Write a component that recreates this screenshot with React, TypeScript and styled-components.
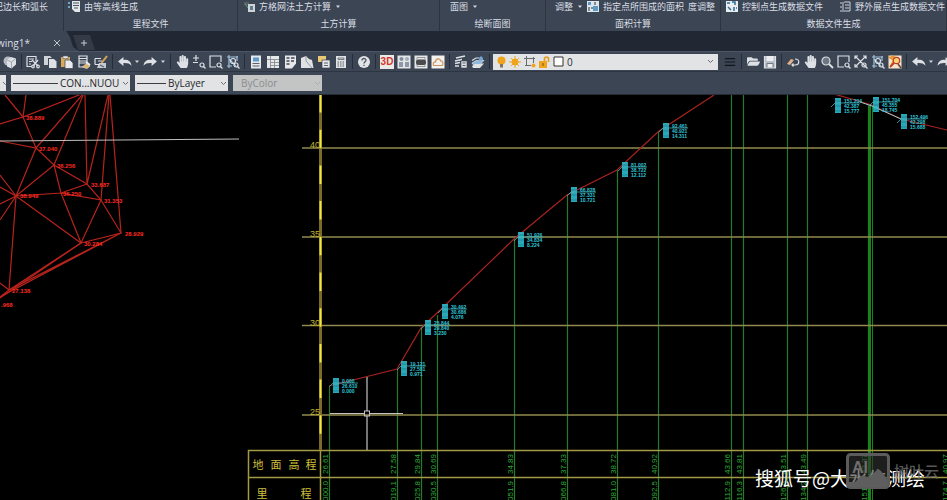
import React from "react";
import styled, { createGlobalStyle } from "styled-components";
import { FaHandPaper, FaFolderOpen } from "react-icons/fa";

const Global = createGlobalStyle`
  * { box-sizing: border-box; }
  body { margin: 0; background: #000; }
  button, select { font: inherit; color: inherit; margin: 0; }
`;

const SANS = `"Open Sans", "Noto Sans CJK SC", sans-serif`;

const Page = styled.div`
  min-height: 100vh;
  display: flex;
  flex-direction: column;
  overflow: hidden;
  background: #000;
  font-family: ${SANS};
  color: #dbdfe5;
`;

/* ---------- ribbon ---------- */

const Ribbon = styled.header`
  display: flex;
  height: 31px;
  background: #3c4554;
  overflow: hidden;
`;

const Panel = styled.section<{ $width?: number }>`
  flex: ${(p) => (p.$width ? `0 0 ${p.$width}px` : "1 0 0")};
  min-width: 0;
  display: flex;
  flex-direction: column;
  border-right: 1px solid #2c3441;
  font-family: "Noto Sans CJK SC", sans-serif;
  font-size: 9px;
  line-height: 12px;
`;

const PanelRow = styled.div<{ $start?: number; $end?: boolean; $gap?: number }>`
  display: flex;
  align-items: center;
  justify-content: ${(p) => (p.$end ? "flex-end" : "flex-start")};
  gap: ${(p) => p.$gap ?? 0}px;
  height: 13px;
  padding-left: ${(p) => p.$start ?? 0}px;
  padding-right: ${(p) => (p.$end ? 15 : 0)}px;
`;

const PanelTitle = styled.h2`
  margin: 5px 0 0;
  font-size: 9px;
  line-height: 12px;
  font-weight: 400;
  text-align: center;
`;

const Command = styled.button`
  display: flex;
  align-items: center;
  gap: 4px;
  flex: none;
  padding: 0;
  border: 0;
  background: none;
  white-space: nowrap;
  line-height: 12px;
  svg { display: block; flex: none; }
`;

/* ---------- file tabs ---------- */

const TabStrip = styled.nav`
  display: flex;
  height: 20px;
  background: #212833;
`;

const FileTab = styled.div`
  display: flex;
  align-items: center;
  justify-content: flex-end;
  width: 79px;
  padding: 4px 18px 0 0;
  gap: 23px;
  overflow: hidden;
  background: #3c4554;
  clip-path: polygon(0 0, 66px 0, 70px 6px, 73px 16px, 79px 20px, 0 20px);
`;

const TabButton = styled.button`
  flex: none;
  padding: 0;
  border: 0;
  background: none;
  font-size: 10px;
  line-height: 14px;
  svg { display: block; }
`;

const NewTab = styled.button`
  display: flex;
  align-items: center;
  justify-content: center;
  width: 22px;
  margin: 4px 0 1px -6px;
  padding: 0;
  border: 0;
  background: #343b47;
  clip-path: polygon(0 0, 17px 0, 22px 15px, 5px 15px);
`;

/* ---------- toolbars ---------- */

const Toolbar = styled.div`
  display: flex;
  align-items: center;
  height: 21px;
  padding-left: 2px;
  gap: 1px;
  background: #3c4554;
  border-top: 1px solid #4b5565;
  border-bottom: 1px solid #2d3542;
  overflow: hidden;
`;

const Tool = styled.button`
  display: flex;
  align-items: center;
  justify-content: center;
  flex: 0 0 16px;
  height: 16px;
  padding: 0;
  border: 0;
  background: none;
  color: #dde1e6;
  svg { display: block; }
`;

const Caret = styled(Tool)`
  flex-basis: 8px;
`;

const Divider = styled.span`
  flex: 0 0 1px;
  height: 15px;
  margin: 0 2px;
  background: #262d38;
`;

const LayerField = styled.label`
  display: flex;
  align-items: center;
  flex: 0 0 225px;
  height: 16px;
  margin-right: 3px;
  padding: 0 4px;
  gap: 3px;
  background: #e2e3e4;
  color: #2a2d32;
  font-size: 9px;
  svg { display: block; flex: none; }
`;

const PlainSelect = styled.select`
  appearance: none;
  flex: 1;
  min-width: 0;
  height: 16px;
  padding: 0;
  border: 0;
  background: none;
  font-size: 10px;
  line-height: 16px;
  &:disabled { opacity: 1; color: #8b8d8f; }
`;

const PropertyBar = styled.div`
  display: flex;
  height: 23px;
  padding: 3px 0 0;
  gap: 5px;
  background: #3c4554;
  border-bottom: 1px solid #252c36;
`;

const Field = styled.label<{ $width: number; $off?: boolean }>`
  display: flex;
  align-items: center;
  flex: 0 0 ${(p) => p.$width}px;
  height: 16px;
  padding: 0 1px 0 ${(p) => (p.$off ? 8 : 2)}px;
  gap: 2px;
  overflow: hidden;
  background: ${(p) => (p.$off ? "#c3c4c4" : "#e2e3e4")};
  color: #24272c;
  svg { display: block; flex: none; }
`;

const LineSample = styled.span<{ $width: number }>`
  flex: 0 0 ${(p) => p.$width}px;
  height: 1px;
  background: #3a3d42;
`;

/* ---------- drawing area ---------- */

const Workspace = styled.main`
  position: relative;
  background: #000;
`;

const Drawing = styled.svg`
  display: block;
  width: 100%;
  height: auto;
`;

const Account = styled.div`
  position: absolute;
  right: 22px;
  bottom: 8px;
  font: 400 19px/28px "Noto Sans CJK SC", sans-serif;
  color: #fff;
  white-space: nowrap;
`;

const Brand = styled.div`
  position: absolute;
  right: 8px;
  bottom: 11px;
  display: flex;
  align-items: center;
  gap: 4px;
  font: 500 15px/20px "Noto Sans CJK SC", sans-serif;
  color: rgba(112, 112, 112, 0.8);
  svg { display: block; }
`;

/* ---------- icons ---------- */

const Icon = ({ children, size = 14 }: { children: React.ReactNode; size?: number }) => (
  <svg width={size} height={size} viewBox="0 0 14 14" fill="none" stroke="currentColor" strokeWidth="1.2">
    {children}
  </svg>
);

const Chevron = ({ color = "#6a6d71" }: { color?: string }) => (
  <svg width="7" height="5" viewBox="0 0 7 5" fill="none" stroke={color}>
    <path d="M1 1l2.5 2.5L6 1" />
  </svg>
);

const Down = () => (
  <svg width="6" height="4" viewBox="0 0 6 4" fill="#d3d8df">
    <path d="M1 0.5h4L3 3z" />
  </svg>
);

const Lens = <><circle cx="10" cy="10" r="2" /><path d="M11.5 11.5L13.5 13.5" /></>;

const icons: Record<string, React.ReactNode> = {
  publish: <Icon><g fill="currentColor" stroke="none"><circle cx="5" cy="6" r="4.5" opacity=".75" /><path d="M4 5l4-3 5 1.500v6l-4.500 4-4.500-2z" /></g><path d="M4 5l4.500 2L13 3.500M8.500 7v6" stroke="#8b929c" strokeWidth=".7" /></Icon>,
  cut: <Icon><path d="M1 1.500h9v5M1 1.500v10h5M3 4h5M3 6.500h3M3 9h2" /><path d="M6 5l6 6M12 5l-5 6" strokeWidth="1.400" /><circle cx="7" cy="11.500" r="1.300" /><circle cx="12" cy="11.500" r="1.300" /></Icon>,
  copy: <Icon><g fill="currentColor" stroke="none"><path d="M1 1h6l2 2h-4v7H1z" opacity=".9" /><path d="M6 4h5l2.500 2.500V13H6z" /></g><path d="M5.500 11V3.500H10" stroke="#3c4554" strokeWidth=".8" /></Icon>,
  paste: <Icon><path d="M1 2h9v10H1z" fill="#d9a955" stroke="none" /><path d="M3 1h5v2.500H3z" fill="#e9ebee" stroke="#59616d" strokeWidth=".6" /><path d="M5 5h5l3 3v5.500H5z" fill="#e9ebee" stroke="#3c4554" strokeWidth=".7" /></Icon>,
  match: <Icon><path d="M2 1h8v7H2zM2 3.500h8M2 6h8M2 8v4h3" /><path d="M5 12l5-3.500 3 2.500-3 2.500z" fill="#e0b15c" stroke="#eee" strokeWidth=".6" /><path d="M9 7l4 3" stroke="#e9ebee" strokeWidth="2" /></Icon>,
  brush: <Icon><path d="M1 3.500h6M1 3.500v6M1 9.500h5M4 6h4" /><path d="M13 1L7.500 8" stroke="#d7a858" strokeWidth="2" /><path d="M5 8h7v5H3z" fill="currentColor" stroke="none" opacity=".85" /><path d="M6 10l4 2" stroke="#59616d" /></Icon>,
  undo: <Icon size={15}><path d="M1 7l5-4.200v2.700c4.500-.3 7 1.500 7.500 5.500-1.800-2.300-4-2.700-7.500-2.500v2.700z" fill="currentColor" stroke="none" /></Icon>,
  redo: <Icon size={15}><path d="M13 7L8 2.800v2.700C3.500 5.200 1 7 .5 11 2.300 8.700 4.500 8.300 8 8.500v2.700z" fill="currentColor" stroke="none" /></Icon>,
  hand: <FaHandPaper size={13} />,
  realtime: <Icon><path d="M4 0v6M1 3h6M1 7.500h5" />{Lens}</Icon>,
  window: <Icon><path d="M7 12H1V1h11v6" />{Lens}</Icon>,
  previous: <Icon><path d="M1 2h11M3 0v13M11 1v5M1 11h5M3 4l7 7" stroke="#9fc3dd" /><circle cx="7" cy="6" r="2.500" />{Lens}</Icon>,
  props: <Icon><path d="M2 .5h10v13H2z" fill="#e6e8ea" stroke="none" /><path d="M4 2.500h6v4H4z" fill="#5e9acb" stroke="none" /><path d="M3.500 8.500h7M3.500 11h7" stroke="#58616e" /></Icon>,
  center: <Icon><path d="M1 1h12v12H1z" fill="#e6e8ea" stroke="none" /><path d="M4.500 1v12M1 4.500h12M8.500 4.500V13M4.500 7.500H13M4.500 10.500H13" stroke="#7c838d" strokeWidth=".8" /></Icon>,
  palette: <Icon><path d="M2 .5h11v8l-4 5H2z" fill="#e6e8ea" stroke="none" /><path d="M3.500 3h3M8 3h3.500M3.500 6h3M8 6h3M3.500 9h3" stroke="#3f4753" strokeWidth="1.500" /></Icon>,
  sheet: <Icon><path d="M1 3l5-2 3 3 3 1 1.500 8H1z" fill="#dfe1e3" stroke="none" /><path d="M6 1v5l6 7" stroke="#868c95" strokeWidth=".8" /></Icon>,
  markup: <Icon><path d="M1 1h8v6H1z" fill="#e9c873" stroke="none" /><path d="M5 5h8v8H5z" fill="#e6e8ea" stroke="#3c4554" strokeWidth=".7" /><path d="M7 8h4M7 10.500h4" stroke="#59616d" /></Icon>,
  calc: <Icon><path d="M2 1h10v12H2z" fill="#dfe1e3" stroke="none" /><path d="M4 3h6v1.500H4z" stroke="#59616d" strokeWidth=".8" /><path d="M3.500 7h7M3.500 9h7M3.500 11h7" stroke="#59616d" strokeDasharray="1.500 1" /></Icon>,
  help: <Icon><circle cx="7" cy="7" r="6" fill="#e1e4e7" stroke="none" /><path d="M5 5.500C5 2.800 9 3 9 5.200 9 6.800 7 6.800 7 8.500M7 9.800V11" stroke="#4e5663" strokeWidth="1.300" /></Icon>,
  clouds: <Icon><path d="M.5.5h13v13H.5z" fill="#e4e6e8" stroke="none" /><circle cx="4.500" cy="4" r="2" fill="#7f8d9f" stroke="none" /><circle cx="10" cy="4" r="2" fill="#a2adba" stroke="none" /><path d="M2 7h4v5H2zM8 7h4v5H8z" fill="#8e99a8" stroke="none" /></Icon>,
  region: <Icon><path d="M.5.5h13v13H.5z" fill="#e4e6e8" stroke="none" /><path d="M3 2.500h8v9H3z" stroke="#777" strokeWidth=".7" /><rect x="2" y="4.500" width="10" height="5.500" rx="2.500" fill="#4a4a4c" stroke="none" /></Icon>,
  cloud: <Icon><path d="M.5.5h13v13H.5z" fill="#f4f2ee" stroke="none" /><path d="M2.500 10.500c-1-3 1-4 2-3.500 0-4 5-4 5-1 3-.5 3 4 1.500 4.500z" stroke="#c9955a" /></Icon>,
  layers: <Icon><path d="M2 3l9-2M1 6l7-1.500M1 8.500l5-1M1 11h4" strokeWidth="1.600" /><path d="M7 6h6v7H7z" fill="#dfe1e3" stroke="#3c4554" strokeWidth=".6" /><path d="M8.500 8h3M8.500 10.500h3" stroke="#59616d" /></Icon>,
  layerUp: <Icon><path d="M1 11l4-2.500h8L9 13H2z" fill="#dfe1e3" stroke="none" /><path d="M1 8l4-2.500h8L9 9.500H2z" fill="#8fb9dc" stroke="#eee" strokeWidth=".6" /><path d="M8 6V3l2-2 2 2v2" fill="#6da5d5" stroke="none" /><path d="M1 5.500L5 3h3" /></Icon>,
  lines: <Icon size={12}><path d="M1 3h12M1 7h12M1 11h12" stroke="#12161c" strokeWidth="1.400" /></Icon>,
  folder: <FaFolderOpen size={13} />,
  save: <Icon><path d="M1 1h12v12H1z" fill="#b9bfc8" stroke="none" /><path d="M3.500 1h7v5h-7z" fill="#eceef0" stroke="none" /><path d="M4 8.500h6V13H4z" fill="#eceef0" stroke="#59616d" strokeWidth=".8" /><path d="M1.500 1v12h11V1" /></Icon>,
  orbit: <Icon><path d="M1 9l4-5 3 1-4 5z" fill="#e4b38a" stroke="none" /><path d="M9 4c5 0 5 6 0 6H6M7.500 8.500L6 10l1.500 1.500" /></Icon>,
  zoom: <Icon><circle cx="6" cy="6" r="4" fill="#6d7683" /><path d="M9 9l4 4" strokeWidth="1.800" /></Icon>,
  extents: <Icon><path d="M1 1l10 10M12 1L1 12M1 4V1h3M9 1h3v3M1 9v3h3" />{Lens}</Icon>,
  erase: <Icon><path d="M.5.500h13v13H.5z" fill="#f3e6cc" stroke="none" /><path d="M1 2l5 3-3 6M3 1l5 2" stroke="#e8962f" strokeWidth="2" /><circle cx="8.500" cy="5.500" r="3.200" fill="#f7d774" stroke="#c2382b" /><path d="M6 8l-4 4" stroke="#c2382b" strokeWidth="1.800" /><path d="M10 9l3 4" stroke="#7c3a33" strokeWidth="1.500" /></Icon>,
};

const ThreeD = styled.span`
  width: 14px;
  height: 14px;
  background: #eceae8;
  color: #d3372c;
  font: 700 10px/14px "Liberation Sans", sans-serif;
  text-align: center;
`;

const T = ({ n }: { n: string }) => <Tool aria-label={n}>{icons[n]}</Tool>;
const Tools = ({ list }: { list: string[] }) => <>{list.map((n) => <T key={n} n={n} />)}</>;

const RibbonIcon = ({ kind }: { kind: number }) => (
  <svg width="12" height="12" viewBox="0 0 12 12">
    {kind === 0 && <><path d="M0 1h2v2H0zM0 5h2v2H0z" fill="#69a8d6" /><path d="M4 0h8v11H7L4 8z" fill="#e4e7ea" /><path d="M5 2h6M5 4.500h6M6 7h4" stroke="#4b5462" /></>}
    {kind === 1 && <><path d="M1 1h5v3H1z" fill="#56605f" /><path d="M2 3l4 5" stroke="#5aa382" /><path d="M5 3h7v8H5z" fill="#cfd3d6" /><path d="M7 5h3v4H7z" fill="#5b7f92" /></>}
    {kind === 2 && <><path d="M0 0h12v11H0z" fill="#dfe6eb" /><path d="M1 1h3v3H1zM6 5h5v5H6z" fill="#5a9bc7" /><path d="M2 6v4M8 1v3M4 7h2" stroke="#27303c" /></>}
    {kind === 3 && <><path d="M0 0h12v11H0z" fill="#e8edf0" /><path d="M1 2h3M6 1h3v3M2 6l3 3M8 6v4M10 7h1" stroke="#2d6d94" strokeWidth="1.500" fill="none" /></>}
    {kind === 4 && <path d="M1 2h2M1 6h2M1 10h2M4 1v10M5 1h6v9H5M6 4h4M6 7h4" stroke="#cfd4da" fill="none" />}
  </svg>
);

/* ---------- drawing data ---------- */

const mesh = [
  "5,95 23,117", "26,95 23,117 84,93", "0,124 23,117 36,148 54,165 87,184 101,200 121,233 81,243",
  "0,141 36,148 84,93", "54,165 84,93", "85,95 87,184 108,95", "101,200 109,95", "121,233 110,95",
  "36,148 16,196 54,165 61,193 16,196", "87,184 61,193 101,200 81,243 61,193", "16,196 81,243 9,290 16,196",
  "0,283 9,290 121,233 0,297 9,290", "81,243 0,298", "0,175 16,196 0,187", "0,204 16,196 0,220",
];

const spots: [number, number, string][] = [
  [26, 120, "38.889"], [39, 151, "37.040"], [57, 168, "36.256"], [20, 198, "38.949"], [63, 196, "36.250"],
  [91, 187, "33.687"], [104, 203, "31.353"], [125, 236, "28.929"], [84, 246, "30.284"], [12, 293, "27.138"], [1, 307, ".968"],
];

const stations: { x: number; top: number; elev: string; dist: string }[] = [
  { x: 329, top: 387, elev: "26.61", dist: "0000.0" },
  { x: 397, top: 369, elev: "27.58", dist: "0019.1" },
  { x: 421, top: 328, elev: "29.84", dist: "0025.8" },
  { x: 437, top: 315, elev: "30.69", dist: "0030.5" },
  { x: 514, top: 239, elev: "34.83", dist: "0051.9" },
  { x: 567, top: 195, elev: "37.33", dist: "0066.8" },
  { x: 617, top: 170, elev: "38.72", dist: "0081.0" },
  { x: 658, top: 132, elev: "40.92", dist: "0092.5" },
  { x: 731, top: 95, elev: "43.66", dist: "0112.9" },
  { x: 743, top: 95, elev: "43.81", dist: "0116.3" },
  { x: 787, top: 95, elev: "43.51", dist: "0126.5" },
  { x: 807, top: 95, elev: "43.49", dist: "0134.2" },
  { x: 868, top: 105, elev: "42.37", dist: "0151.2" },
  { x: 949, top: 130, elev: "40.97", dist: "0174.7" },
];

const tags: [number, number, string[]][] = [
  [333, 378, ["0.000", "26.610", "0.000"]],
  [401, 361, ["19.121", "27.581", "0.971"]],
  [425, 320, ["25.844", "29.840", "3.230"]],
  [442, 304, ["30.492", "30.686", "4.076"]],
  [518, 232, ["51.926", "34.834", "8.224"]],
  [571, 187, ["66.828", "37.331", "10.721"]],
  [622, 162, ["81.002", "38.722", "12.112"]],
  [663, 123, ["92.461", "40.921", "14.311"]],
  [835, 98, ["151.204", "42.387", "15.777"]],
  [873, 97, ["151.704", "45.355", "18.745"]],
  [901, 114, ["152.496", "42.298", "15.688"]],
];

const Tag = ({ x, y, rows }: { x: number; y: number; rows: string[] }) => (
  <g fill="#2fc6d8">
    {rows.map((r, i) => (
      <React.Fragment key={i}>
        <rect x={x} y={y + i * 5} width="6" height="5" opacity=".85" />
        <path d={`M${x} ${y + i * 5 + 3}h6`} stroke="#0d6f7d" strokeWidth=".5" />
        <text x={x + 9} y={y + i * 5 + 5} fontSize="5" fontWeight="700">{r}</text>
      </React.Fragment>
    ))}
    <path d={`M${x - 4} ${y + 9}l4 -4h25`} stroke="#45aebb" strokeWidth=".8" fill="none" />
  </g>
);

const Profile = () => (
  <Drawing viewBox="0 95 947 405" fontFamily='"Liberation Sans", "Noto Sans CJK SC", sans-serif' role="img" aria-label="断面图">
    <g fill="none" stroke="#b8231c" strokeWidth="1.200">
      {mesh.map((p) => <polyline key={p} points={p} />)}
    </g>
    <g fill="#ff2a20" fontSize="6" fontWeight="700">
      {spots.map(([x, y, t]) => <text key={t} x={x} y={y}>{t}</text>)}
    </g>
    <path d="M0 141L239 139" stroke="#bdbdbd" strokeWidth="1.200" />

    <g stroke="#267a2c" strokeWidth="1.200">
      {stations.map((s) => <path key={s.x} d={`M${s.x + 0.5} ${s.top}V500`} />)}
    </g>
    <path d="M869.500 105V500" stroke="#1b821b" strokeWidth="3" />
    <path d="M872.500 105V500" stroke="#1b821b" />

    <g stroke="#918a4e" strokeWidth="1.500">
      <path d="M302 148H947M302 237H947M302 325.500H947M302 415H947" />
      <path d="M248 450.500H947M248 477.500H947M248.500 450V500M320.500 450V500" stroke="#a39a45" />
    </g>
    <path d="M320.500 95V450" stroke="#7a6c28" strokeWidth="3" />
    <path d="M320.500 94V450" stroke="#f3e53a" strokeWidth="2" strokeDasharray="18.500 17.200" />
    <g fill="#c5b52f" fontSize="9" textAnchor="end">
      <text x="320" y="148">40</text>
      <text x="320" y="237">35</text>
      <text x="320" y="326">30</text>
      <text x="320" y="415">25</text>
    </g>

    <g fill="none" stroke="#a8231e" strokeWidth="1.200">
      <polyline points="329,386 397,369 421,328 437,313 514,239 567,195 617,170 659,131 714,95" />
      <polyline points="834,94 872,105 901,119 947,130" />
    </g>
    <path d="M860 102L872 106L901 119" stroke="#9bc4c8" fill="none" />
    {tags.map(([x, y, rows]) => <Tag key={x} x={x} y={y} rows={rows} />)}

    <g fill="#2fa838" fontSize="8">
      {stations.map((s) => (
        <React.Fragment key={s.x}>
          <text transform={`translate(${s.x - 1} 474) rotate(-90)`}>{s.elev}</text>
          <text transform={`translate(${s.x - 1} 481) rotate(-90)`} textAnchor="end">{s.dist}</text>
        </React.Fragment>
      ))}
    </g>

    <g fill="#d0bf3a" fontSize="11" textAnchor="middle">
      <text x="258" y="469">地</text>
      <text x="276" y="469">面</text>
      <text x="294" y="469">高</text>
      <text x="311" y="469">程</text>
      <text x="262" y="498">里</text>
      <text x="306" y="498">程</text>
    </g>

    <g stroke="#c4c4c4" fill="none">
      <path d="M367 377V411M367 416V450M330 413.500H364M370 413.500H403" strokeWidth="1.200" />
      <rect x="364.500" y="411" width="5" height="5" />
    </g>
  </Drawing>
);

export default function App() {
  return (
    <Page>
      <Global />
      <Ribbon>
        <Panel $width={64}>
          <PanelRow $end><Command>标记边长和弧长</Command></PanelRow>
        </Panel>
        <Panel $width={174}>
          <PanelRow $start={4}><Command><RibbonIcon kind={0} />由等高线生成</Command></PanelRow>
          <PanelTitle>里程文件</PanelTitle>
        </Panel>
        <Panel $width={202}>
          <PanelRow $start={5}><Command><RibbonIcon kind={1} />方格网法土方计算<Down /></Command></PanelRow>
          <PanelTitle>土方计算</PanelTitle>
        </Panel>
        <Panel $width={106}>
          <PanelRow $start={10}><Command>面图<Down /></Command></PanelRow>
          <PanelTitle>绘断面图</PanelTitle>
        </Panel>
        <Panel $width={175}>
          <PanelRow $start={9} $gap={4}>
            <Command>调整<Down /></Command>
            <Command><RibbonIcon kind={2} />指定点所围成的面积</Command>
            <Command>度调整</Command>
          </PanelRow>
          <PanelTitle>面积计算</PanelTitle>
        </Panel>
        <Panel>
          <PanelRow $start={5} $gap={16}>
            <Command><RibbonIcon kind={3} />控制点生成数据文件</Command>
            <Command><RibbonIcon kind={4} />野外展点生成数据文件</Command>
          </PanelRow>
          <PanelTitle>数据文件生成</PanelTitle>
        </Panel>
      </Ribbon>

      <TabStrip>
        <FileTab>
          <TabButton>Drawing1*</TabButton>
          <TabButton aria-label="关闭">
            <svg width="8" height="8" viewBox="0 0 8 8" stroke="#c3c8cf"><path d="M1 1l6 6M7 1L1 7" /></svg>
          </TabButton>
        </FileTab>
        <NewTab aria-label="新建">
          <svg width="8" height="8" viewBox="0 0 8 8" stroke="#c3c8cf"><path d="M4 1v6M1 4h6" /></svg>
        </NewTab>
      </TabStrip>

      <Toolbar>
        <T n="publish" />
        <Divider />
        <Tools list={["cut", "copy", "paste", "match", "brush"]} />
        <Divider />
        <T n="undo" /><Caret aria-label="undo list"><Down /></Caret>
        <T n="redo" /><Caret aria-label="redo list"><Down /></Caret>
        <Divider />
        <Tools list={["hand", "realtime", "window", "previous"]} />
        <Divider />
        <Tools list={["props", "center", "palette", "sheet", "markup", "calc"]} />
        <Divider />
        <T n="help" />
        <Divider />
        <Tool><ThreeD>3D</ThreeD></Tool>
        <Tools list={["clouds", "region", "cloud"]} />
        <Divider />
        <Tools list={["layers", "layerUp"]} />
        <Divider />
        <LayerField>
          <svg width="9" height="12" viewBox="0 0 9 12"><circle cx="4.500" cy="4.500" r="4" fill="#f0a41c" /><path d="M3 8h3v3.500H3z" fill="#85735a" /></svg>
          <svg width="12" height="12" viewBox="0 0 12 12" stroke="#f0a41c"><circle cx="6" cy="6" r="3" fill="#f0a41c" /><path d="M6 0v12M0 6h12M2 2l8 8M10 2l-8 8" /></svg>
          <svg width="12" height="12" viewBox="0 0 12 12" fill="none" stroke="#686b70"><path d="M2.500 0v10M0 2.500h11M9.500 1v6M1 9.500h6" /><circle cx="9.500" cy="9.500" r="2" fill="#f0a41c" stroke="none" /></svg>
          <svg width="11" height="12" viewBox="0 0 11 12"><path d="M5.500 6V3q0-2 2-2t2 2v3" fill="none" stroke="#e89b1b" strokeWidth="1.600" /><path d="M0 5h8v7H0z" fill="#f0a41c" /><path d="M4 7v3" stroke="#7b5717" /></svg>
          <svg width="11" height="11" viewBox="0 0 11 11"><path d="M1 1h9v9H1z" fill="#fff" stroke="#333" /></svg>
          <PlainSelect aria-label="图层" defaultValue="0"><option>0</option></PlainSelect>
          <Chevron />
        </LayerField>
        <T n="lines" />
        <Divider />
        <Tools list={["folder", "save"]} />
        <Divider />
        <Tools list={["orbit", "hand", "zoom", "window", "extents", "previous", "erase"]} />
        <Divider />
        <T n="undo" /><Caret aria-label="undo list"><Down /></Caret>
        <T n="redo" />
      </Toolbar>

      <PropertyBar>
        <Field $width={6}><Chevron /></Field>
        <Field $width={119}>
          <LineSample $width={45} />
          <PlainSelect aria-label="线型"><option>CON...NUOU</option></PlainSelect>
          <Chevron />
        </Field>
        <Field $width={93}>
          <LineSample $width={29} />
          <PlainSelect aria-label="线宽"><option>ByLayer</option></PlainSelect>
          <Chevron />
        </Field>
        <Field $width={89} $off>
          <PlainSelect aria-label="打印样式" disabled><option>ByColor</option></PlainSelect>
          <Chevron color="#acaeaf" />
        </Field>
      </PropertyBar>

      <Workspace>
        <Profile />
        <Account>搜狐号@大水牛测绘</Account>
        <Brand>
          <svg width="44" height="36" viewBox="0 0 44 36">
            <rect x="1.500" y="1.500" width="41" height="33" rx="3" fill="rgba(50,50,50,.6)" stroke="#5b5b5b" strokeWidth="3" />
            <path d="M3 34v-5h6l6-6q2-1 4 0l3 2 9-8q2-1 4 1l6 8v8z" fill="#5e5e5e" />
            <text x="6" y="20" fontSize="16" fontWeight="700" fill="#6e6e6e" fontFamily="Liberation Sans">AI</text>
          </svg>
          树叶云
        </Brand>
      </Workspace>
    </Page>
  );
}
